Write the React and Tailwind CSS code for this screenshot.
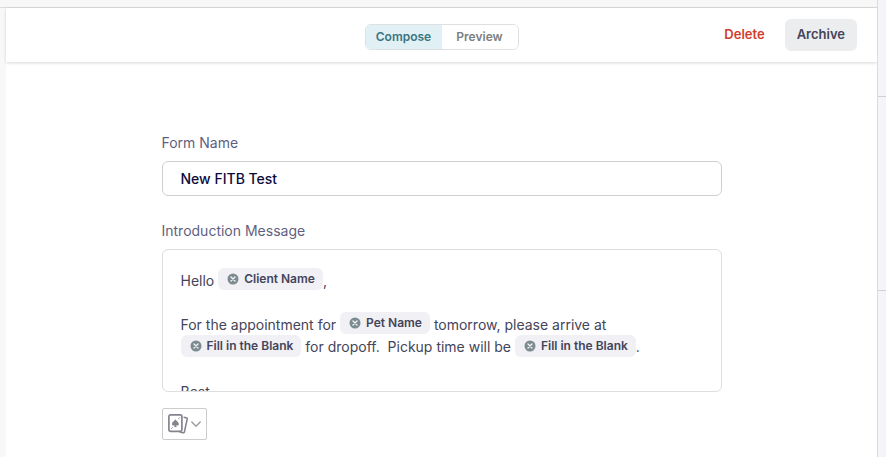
import React, { useState } from 'react';

function Chip({ children }) {
  return (
    <span
      contentEditable={false}
      className="inline-flex items-center h-[22px] px-2 -mt-1 mb-0.5 gap-1 rounded-md bg-[#f0f0f5] align-middle text-xs leading-4 font-semibold text-[#44445a] whitespace-nowrap"
    >
      <button type="button" aria-label="Remove field" className="flex w-[14px] justify-center">
        <svg className="w-3 h-3" viewBox="0 0 12 12" fill="none">
          <circle cx="6" cy="6" r="5.5" fill="#7b8b8f" />
          <path d="M4 4l4 4M8 4l-4 4" stroke="#f0f0f5" strokeWidth="1.4" strokeLinecap="round" />
        </svg>
      </button>
      {children}
    </span>
  );
}

function CardsIcon() {
  return (
    <svg className="w-5 h-5" viewBox="0 0 20 20" fill="none" stroke="#84848e">
      <rect x="0.9" y="0.9" width="13" height="16.4" rx="1.6" strokeWidth="1.7" />
      <path d="M15.6 3.2l2.8.6c.6.1.9.6.8 1.2l-2.8 13c-.1.6-.6.9-1.2.8l-3.6-.8" strokeWidth="1.5" />
      <path d="M3.2 14.8l1.6-1.6M10.2 5l1.6-1.6" strokeWidth="0.9" />
      <path
        d="M7.4 5.2C6.6 6.8 4 7.9 4 9.9c0 1.8 2 2.2 2.8 1.1l-.7 1.9h2.6L8 11c.8 1.1 2.8.7 2.8-1.1 0-2-2.6-3.1-3.4-4.7z"
        fill="#84848e"
        stroke="none"
      />
    </svg>
  );
}

export default function App() {
  const [mode, setMode] = useState('compose');
  const [name, setName] = useState('New FITB Test');

  const tab = (active) =>
    active ? 'bg-[#e1f0f4] text-[#3b7481]' : 'bg-white text-[#7b8080]';

  return (
    <div className="h-screen flex overflow-hidden bg-[#f8f8f8] font-['Inter',sans-serif]">
      <div className="flex-1 min-w-0 flex flex-col">
        <div className="h-2 shrink-0 bg-[#f7f7f7] border-b border-[#dcdcdc]" />

        <main className="flex-1 min-h-0 ml-[6px] bg-white">
          <header className="grid grid-cols-[1fr_auto_1fr] items-center h-[54px] px-5 bg-white shadow-[0_1px_3px_rgba(0,0,0,0.16)]">
            <div />
            <div className="flex w-[154px] h-[26px] mt-1 rounded-md border border-[#dde1e2] overflow-hidden text-xs font-semibold">
              <button type="button" onClick={() => setMode('compose')} className={`flex-1 ${tab(mode === 'compose')}`}>
                Compose
              </button>
              <button type="button" onClick={() => setMode('preview')} className={`flex-1 ${tab(mode === 'preview')}`}>
                Preview
              </button>
            </div>
            <div className="flex justify-end gap-2 text-[13px] font-semibold">
              <button type="button" className="h-8 px-3 text-[#d23c2a]">Delete</button>
              <button type="button" className="h-8 px-3 rounded-md bg-[#ecedef] text-[#44445a]">Archive</button>
            </div>
          </header>

          {/* Form */}
          <form className="max-w-[560px] mx-auto pt-[71px] text-sm">
            <label htmlFor="form-name" className="block leading-5 text-[#5f5f82]">Form Name</label>
            <input
              id="form-name"
              value={name}
              onChange={(e) => setName(e.target.value)}
              className="block w-full h-[35px] mt-2 px-[18px] rounded-md border border-[#cfcfcf] bg-white font-medium text-[#0b0b3b] outline-none"
            />

            <div id="intro-label" className="mt-[25px] leading-5 text-[#5f5f82]">Introduction Message</div>
            <div
              role="textbox"
              aria-multiline="true"
              aria-labelledby="intro-label"
              contentEditable
              suppressContentEditableWarning
              className="h-[143px] mt-2 pt-5 px-[18px] rounded-md border border-[#dedede] overflow-hidden leading-[22px] text-[#44445a] outline-none"
            >
              <p>Hello <Chip>Client Name</Chip>,</p>
              <p><br /></p>
              <p className="whitespace-pre-wrap">
                For the appointment for <Chip>Pet Name</Chip> tomorrow, please arrive at <Chip>Fill in the Blank</Chip> for dropoff.  Pickup time will be <Chip>Fill in the Blank</Chip>.
              </p>
              <p><br /></p>
              <p>Best</p>
            </div>

            <button
              type="button"
              aria-label="Insert smart field"
              className="flex items-center justify-center gap-[3px] w-[45px] h-8 mt-4 rounded-xs border border-[#cccccc] bg-white"
            >
              <CardsIcon />
              <svg className="w-[10px] h-[10px]" viewBox="0 0 10 10" fill="none" stroke="#9c9ca2" strokeWidth="1.5" strokeLinecap="round">
                <path d="M0.8 3l4.2 4.2L9.2 3" />
              </svg>
            </button>
          </form>
        </main>
      </div>

      <aside className="w-[9px] shrink-0 border-l border-[#dcdce0] bg-[#f4f4fa]">
        <div className="h-[97px] border-b border-[#cfcfd4]" />
        <div className="h-[194px] border-b border-[#cfcfd4]" />
      </aside>
    </div>
  );
}
